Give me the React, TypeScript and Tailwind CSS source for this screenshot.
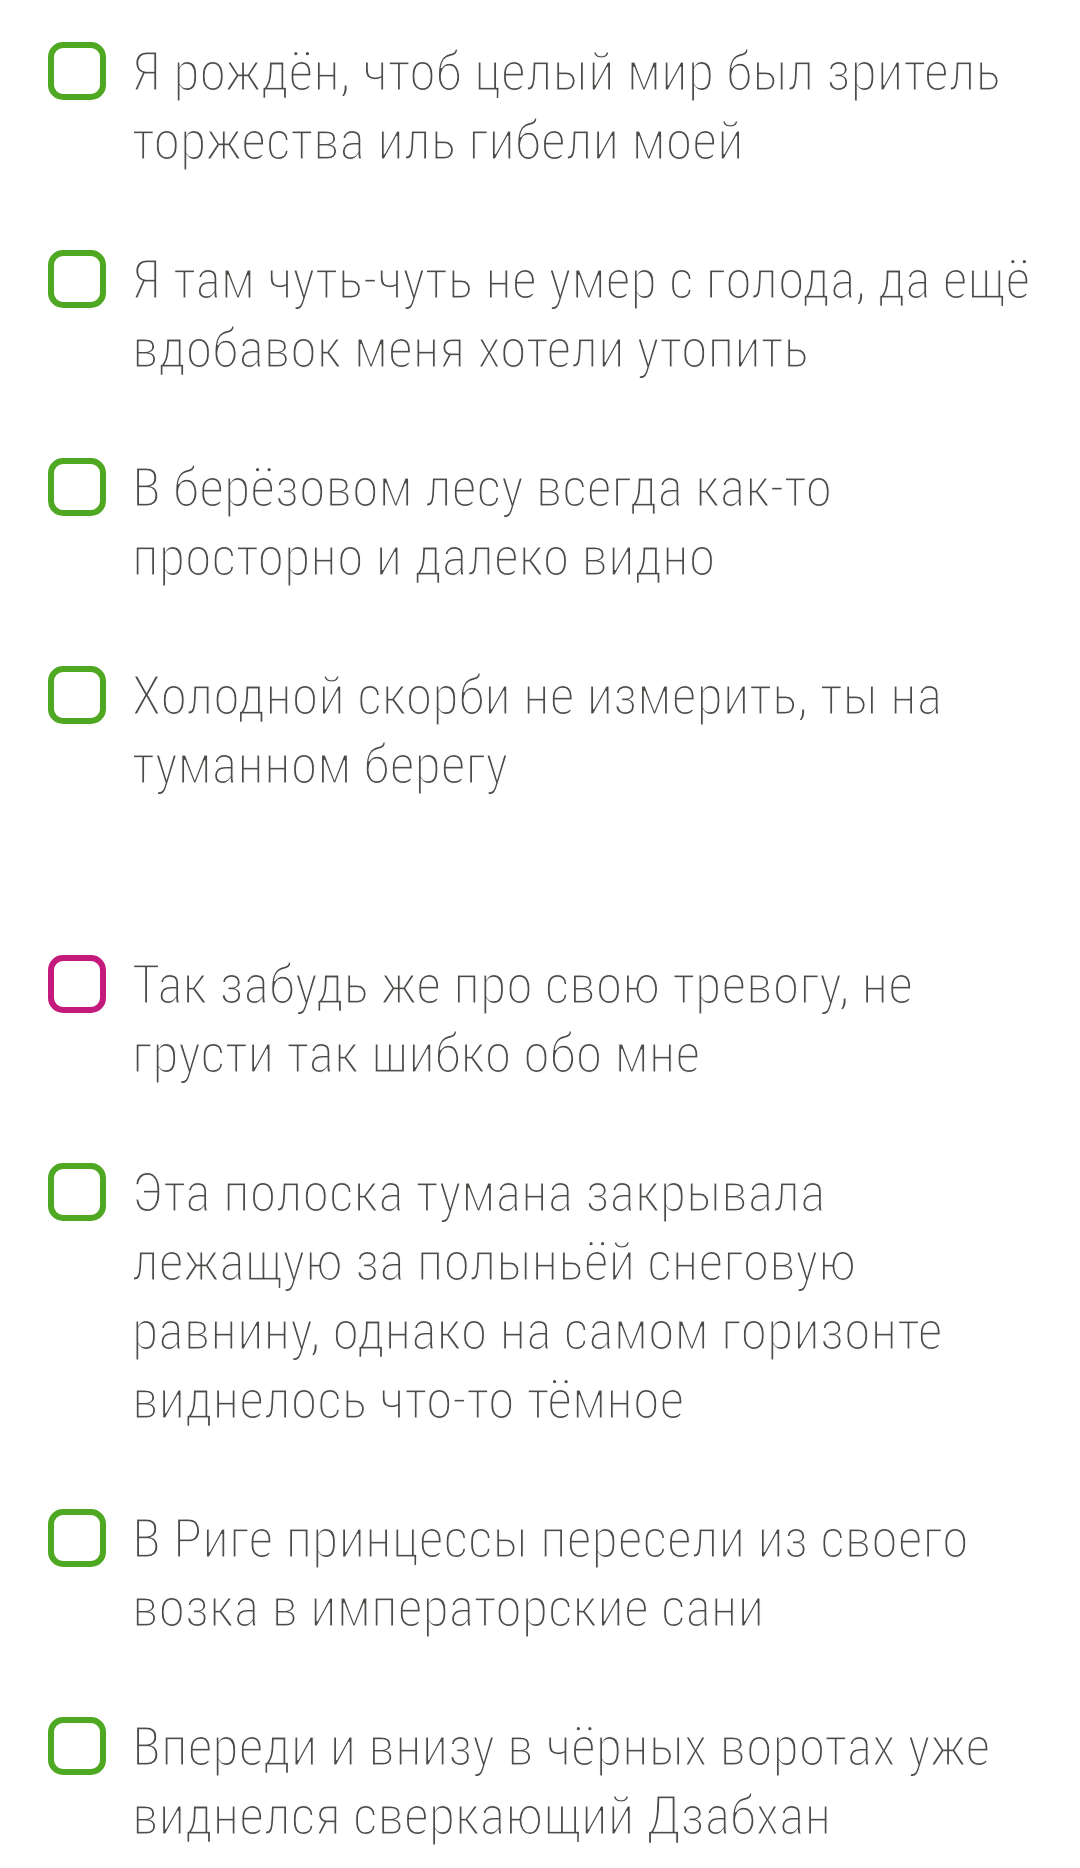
const items: { lines: string[]; color: 'green' | 'pink'; extra?: boolean }[] = [
  { lines: ['Я рождён, чтоб целый мир был зритель', 'торжества иль гибели моей'], color: 'green' },
  { lines: ['Я там чуть-чуть не умер с голода, да ещё', 'вдобавок меня хотели утопить'], color: 'green' },
  { lines: ['В берёзовом лесу всегда как-то', 'просторно и далеко видно'], color: 'green' },
  { lines: ['Холодной скорби не измерить, ты на', 'туманном берегу'], color: 'green', extra: true },
  { lines: ['Так забудь же про свою тревогу, не', 'грусти так шибко обо мне'], color: 'pink' },
  {
    lines: [
      'Эта полоска тумана закрывала',
      'лежащую за полыньёй снеговую',
      'равнину, однако на самом горизонте',
      'виднелось что-то тёмное',
    ],
    color: 'green',
  },
  { lines: ['В Риге принцессы пересели из своего', 'возка в императорские сани'], color: 'green' },
  { lines: ['Впереди и внизу в чёрных воротах уже', 'виднелся сверкающий Дзабхан'], color: 'green' },
]

function Checkbox({ color }: { color: 'green' | 'pink' }) {
  return (
    <span
      className={`mt-[5px] block h-[58px] w-[58px] shrink-0 rounded-[15px] border-[6px] bg-white ${
        color === 'green' ? 'border-[#4fa822]' : 'border-[#c41a7b]'
      }`}
    />
  )
}

export default function App() {
  return (
    <div
      className="min-h-[1868px] w-[1080px] bg-white pt-[37px]"
      style={{ fontFamily: '"Roboto Condensed Light", "Roboto Condensed", Roboto, sans-serif' }}
    >
      <ul className="flex flex-col gap-[70px] pl-[48px] pr-[30px]">
        {items.map((item, i) => (
          <li key={i} className={`flex items-start gap-[26px] ${item.extra ? 'mb-[81px]' : ''}`}>
            <Checkbox color={item.color} />
            {/* only the regular cut is installed, a thin white stroke brings it close to the light one */}
            <p className="whitespace-nowrap text-[54px] font-light leading-[69px] text-[#4b4c48] [-webkit-text-stroke:1.1px_#fff]">
              {item.lines.map((line, j) => (
                <span key={j} className="block">
                  {line}
                </span>
              ))}
            </p>
          </li>
        ))}
      </ul>
    </div>
  )
}
